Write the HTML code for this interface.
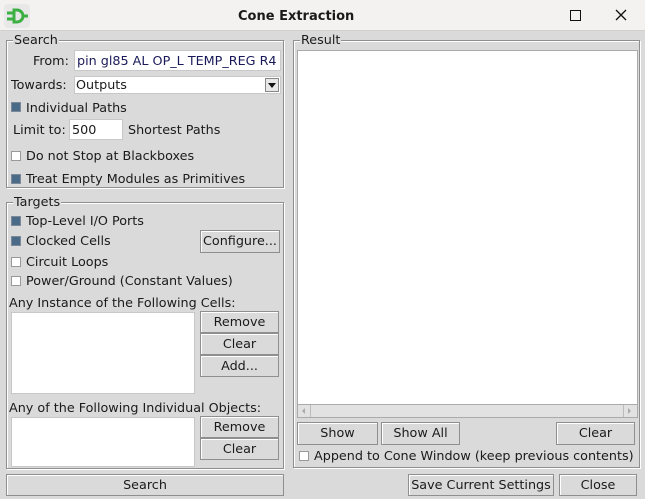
<!DOCTYPE html>
<html><head><style>
*{box-sizing:border-box;margin:0;padding:0}
body{width:645px;height:499px;background:#dadada;font-family:"DejaVu Sans","Liberation Sans",sans-serif;font-size:12.75px;color:#1a1a1a;position:relative;overflow:hidden}
.a{position:absolute;white-space:nowrap}
.title{left:0;top:0;width:645px;height:31px;background:#f3f2f1;border-bottom:1px solid #d0d0d0}
.fs{position:absolute;border:1px solid #8f8f8f;box-shadow:inset 1px 1px 0 #fff,1px 1px 0 #fff}
.lg{position:absolute;background:#dadada;padding:1px 1px 0;line-height:14px}
.in{position:absolute;background:#fff;border:1px solid #c8c8c8}
.btn{position:absolute;background:#dadada;border:1px solid #8f8f8f;box-shadow:inset 1px 1px 0 #fff;text-align:center;line-height:21px}
.cb{position:absolute;width:10px;height:10px;border:1px solid #999;background:#fff}
.cb.on{background:#4a6a88;border-color:#7a8a98}
.t{position:absolute;white-space:nowrap;line-height:15px;padding-top:1px}
</style></head><body>
<div class="a title"></div>
<svg class="a" style="left:4px;top:4px" width="26" height="24" viewBox="0 0 26 24"><rect x="0" y="0" width="26" height="24" rx="4" fill="#e8e8e8"/><path d="M10 6h3a6 6 0 0 1 0 12h-3z" fill="none" stroke="#3cb043" stroke-width="3"/><path d="M3 9h7M3 15h7M19 12h5" stroke="#3cb043" stroke-width="3"/></svg>
<div class="t" style="left:238px;top:8px;font-weight:bold;font-size:13px">Cone Extraction</div>
<div class="a" style="left:570px;top:10px;width:11px;height:11px;border:1.5px solid #111"></div>
<svg class="a" style="left:615px;top:9px" width="12" height="12"><path d="M1 1L11 11M11 1L1 11" stroke="#111" stroke-width="1.3"/></svg>

<div class="fs" style="left:6px;top:40px;width:278px;height:148px"></div>
<div class="lg" style="left:13px;top:33px">Search</div>
<div class="t" style="left:33px;top:53px">From:</div>
<div class="in" style="left:74px;top:50px;width:207px;height:21px"></div>
<div class="t" style="left:77px;top:53px;color:#1a1a5a">pin gl85 AL OP_L TEMP_REG R4</div>
<div class="t" style="left:11px;top:77px">Towards:</div>
<div class="in" style="left:74px;top:76px;width:207px;height:18px"></div>
<div class="t" style="left:76px;top:77px">Outputs</div>
<div class="a" style="left:265px;top:78px;width:14px;height:14px;border:1px solid #888;background:#e8e8e8"></div>
<div class="a" style="left:268px;top:83px;width:0;height:0;border-left:4px solid transparent;border-right:4px solid transparent;border-top:5px solid #111"></div>
<div class="cb on" style="left:11px;top:102px"></div><div class="t" style="left:26px;top:100px">Individual Paths</div>
<div class="t" style="left:13px;top:122px">Limit to:</div>
<div class="in" style="left:69px;top:119px;width:54px;height:21px"></div>
<div class="t" style="left:72px;top:122px">500</div>
<div class="t" style="left:128px;top:122px">Shortest Paths</div>
<div class="cb" style="left:11px;top:151px"></div><div class="t" style="left:26px;top:148px">Do not Stop at Blackboxes</div>
<div class="cb on" style="left:11px;top:174px"></div><div class="t" style="left:26px;top:171px">Treat Empty Modules as Primitives</div>

<div class="fs" style="left:6px;top:202px;width:278px;height:267px"></div>
<div class="lg" style="left:13px;top:195px">Targets</div>
<div class="cb on" style="left:11px;top:216px"></div><div class="t" style="left:26px;top:213px">Top-Level I/O Ports</div>
<div class="cb on" style="left:11px;top:236px"></div><div class="t" style="left:26px;top:233px">Clocked Cells</div>
<div class="btn" style="left:200px;top:230px;width:80px;height:23px">Configure...</div>
<div class="cb" style="left:11px;top:257px"></div><div class="t" style="left:26px;top:254px">Circuit Loops</div>
<div class="cb" style="left:11px;top:276px"></div><div class="t" style="left:26px;top:273px">Power/Ground (Constant Values)</div>
<div class="t" style="left:9px;top:295px">Any Instance of the Following Cells:</div>
<div class="in" style="left:11px;top:312px;width:184px;height:82px"></div>
<div class="btn" style="left:200px;top:311px;width:79px;height:22px">Remove</div>
<div class="btn" style="left:200px;top:333px;width:79px;height:22px">Clear</div>
<div class="btn" style="left:200px;top:355px;width:79px;height:22px">Add...</div>
<div class="t" style="left:9px;top:400px">Any of the Following Individual Objects:</div>
<div class="in" style="left:11px;top:417px;width:184px;height:50px"></div>
<div class="btn" style="left:200px;top:416px;width:79px;height:22px">Remove</div>
<div class="btn" style="left:200px;top:438px;width:79px;height:22px">Clear</div>
<div class="btn" style="left:6px;top:474px;width:278px;height:22px">Search</div>

<div class="fs" style="left:293px;top:40px;width:347px;height:428px"></div>
<div class="lg" style="left:300px;top:33px">Result</div>
<div class="in" style="left:297px;top:50px;width:341px;height:355px;border-color:#aaa"></div>
<div class="a" style="left:297px;top:404px;width:341px;height:14px;background:#e2e2e2;border:1px solid #aaa"></div>
<div class="a" style="left:310px;top:405px;width:1px;height:12px;background:#bbb"></div>
<div class="a" style="left:623px;top:405px;width:1px;height:12px;background:#bbb"></div>
<div class="a" style="left:302px;top:408px;border-top:3px solid transparent;border-bottom:3px solid transparent;border-right:3px solid #aaa"></div>
<div class="a" style="left:628px;top:408px;border-top:3px solid transparent;border-bottom:3px solid transparent;border-left:3px solid #aaa"></div>
<div class="btn" style="left:297px;top:422px;width:81px;height:23px">Show</div>
<div class="btn" style="left:381px;top:422px;width:79px;height:23px">Show All</div>
<div class="btn" style="left:556px;top:422px;width:79px;height:23px">Clear</div>
<div class="cb" style="left:299px;top:451px"></div><div class="t" style="left:314px;top:448px">Append to Cone Window (keep previous contents)</div>
<div class="btn" style="left:408px;top:474px;width:146px;height:22px">Save Current Settings</div>
<div class="btn" style="left:559px;top:474px;width:78px;height:22px">Close</div>
</body></html>
